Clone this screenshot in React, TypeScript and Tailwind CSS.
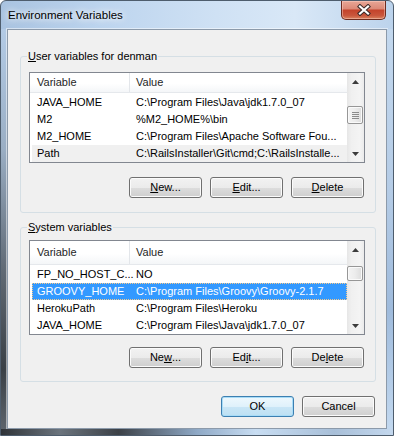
import type { ReactNode } from "react";

type Row = { name: string; value: string; state?: "selected" | "inactive" };

const userVars: Row[] = [
  { name: "JAVA_HOME", value: "C:\\Program Files\\Java\\jdk1.7.0_07" },
  { name: "M2", value: "%M2_HOME%\\bin" },
  { name: "M2_HOME", value: "C:\\Program Files\\Apache Software Fou..." },
  { name: "Path", value: "C:\\RailsInstaller\\Git\\cmd;C:\\RailsInstalle...", state: "inactive" },
];

const systemVars: Row[] = [
  { name: "FP_NO_HOST_C...", value: "NO" },
  { name: "GROOVY_HOME", value: "C:\\Program Files\\Groovy\\Groovy-2.1.7", state: "selected" },
  { name: "HerokuPath", value: "C:\\Program Files\\Heroku" },
  { name: "JAVA_HOME", value: "C:\\Program Files\\Java\\jdk1.7.0_07" },
];

// label with one underlined access key
function Hot({ text, at }: { text: string; at: number }) {
  return (
    <>
      {text.slice(0, at)}
      <u className="underline-offset-[1px]">{text[at]}</u>
      {text.slice(at + 1)}
    </>
  );
}

function Btn({ children, primary }: { children: ReactNode; primary?: boolean }) {
  return (
    <button
      className={
        primary
          ? "flex h-[21px] w-[73px] items-center justify-center rounded-[3px] border border-[#3c7fb1] bg-[linear-gradient(180deg,#eef8fd_0%,#dff1fb_50%,#c9e6f6_50%,#bde0f3_100%)] text-black shadow-[inset_0_0_0_1px_#a8dcf7]"
          : "flex h-[21px] w-[73px] items-center justify-center rounded-[3px] border border-[#707070] bg-[linear-gradient(180deg,#f2f2f2_0%,#ebebeb_50%,#dddddd_50%,#cfcfcf_100%)] text-black shadow-[inset_0_0_0_1px_#fbfbfb]"
      }
    >
      {children}
    </button>
  );
}

function Arrow({ up }: { up?: boolean }) {
  return (
    <div className="flex h-[17px] items-center justify-center">
      <svg width="7" height="4" viewBox="0 0 7 4">
        <polygon points={up ? "0,4 3.5,0 7,4" : "0,0 3.5,4 7,0"} fill="#3c3c3c" />
      </svg>
    </div>
  );
}

function ScrollBar({ thumb, grip }: { thumb: string; grip?: boolean }) {
  return (
    <div className="flex w-[17px] flex-col bg-[linear-gradient(90deg,#e6e6e6_0%,#f0f0f0_25%,#f4f4f4_75%,#ebebeb_100%)]">
      <Arrow up />
      <div className="flex-1">
        <div
          className={`${thumb} flex w-[16px] flex-col items-center justify-center gap-[1px] rounded-[2px] border border-[#979797] bg-[linear-gradient(90deg,#f4f4f4_0%,#ececec_50%,#dcdcdc_100%)] shadow-[inset_0_0_0_1px_#fafafa]`}
        >
          {grip && (
            <>
              <div className="h-[1px] w-[7px] bg-[#8a8a8a]" />
              <div className="h-[1px] w-[7px] bg-[#8a8a8a]" />
              <div className="h-[1px] w-[7px] bg-[#8a8a8a]" />
              <div className="h-[1px] w-[7px] bg-[#8a8a8a]" />
            </>
          )}
        </div>
      </div>
      <Arrow />
    </div>
  );
}

function VarList({ rows, height, thumb, grip }: { rows: Row[]; height: string; thumb: string; grip?: boolean }) {
  return (
    <div className={`${height} ml-[8px] flex w-[336px] overflow-hidden border border-[#828790] bg-white`}>
      <div className="flex flex-1 flex-col">
        <div className="flex h-[24px] border-b border-[#e5e8ec] bg-[linear-gradient(180deg,#ffffff_0%,#ffffff_55%,#f4f6f8_100%)] text-[#1e1e1e]">
          <div className="flex w-[100px] items-center border-r border-[#e3e6ea] pl-[7px]">Variable</div>
          <div className="flex items-center pl-[6px]">Value</div>
        </div>
        <div className="pt-[1px]">
          {rows.map((r) => (
            <div
              key={r.name}
              className={
                r.state === "selected"
                  ? "ml-[2px] flex h-[17px] items-center bg-[#3399ff] text-white outline-1 -outline-offset-1 outline-dotted outline-[#f7c98a]"
                  : r.state === "inactive"
                    ? "ml-[2px] flex h-[17px] items-center bg-[#f0f0f0]"
                    : "ml-[2px] flex h-[17px] items-center"
              }
            >
              <div className="w-[98px] shrink-0 whitespace-nowrap pl-[5px]">{r.name}</div>
              <div className="truncate whitespace-nowrap pl-[6px]">{r.value}</div>
            </div>
          ))}
        </div>
      </div>
      <ScrollBar thumb={thumb} grip={grip} />
    </div>
  );
}

export default function App() {
  return (
    <div className="h-[436px] w-[394px] bg-white font-['Liberation_Sans',Arial,sans-serif] text-[11px] leading-[13px] text-black">
      <div className="flex h-[436px] w-[394px] flex-col overflow-hidden rounded-t-[6px] border border-[#4e5d6d] bg-[linear-gradient(90deg,#a9c3e0_0%,#bcd4ee_25%,#cfe1f4_55%,#d9e8f7_75%,#bcd3ec_100%)]">
        {/* title bar */}
        <div className="flex h-[28px] items-start">
          <div className="pl-[7px] pt-[8px] text-[11.5px] [text-shadow:0_0_6px_#ffffff,0_0_10px_#ffffff]">
            Environment Variables
          </div>
          <div className="ml-auto mr-[7px] flex h-[19px] w-[45px] items-center justify-center rounded-b-[5px] border border-t-0 border-[#6d2b1f] bg-[linear-gradient(180deg,#e8a696_0%,#dc8a78_42%,#c4442c_52%,#c9563c_80%,#d9825f_100%)] shadow-[inset_0_0_0_1px_rgba(255,215,205,0.45)]">
            <svg width="16" height="12" viewBox="0 0 16 12">
              <path d="M4 2.5 L12 9.5 M12 2.5 L4 9.5" stroke="#3b2a28" strokeWidth="4.2" strokeLinecap="square" />
              <path d="M4 2.5 L12 9.5 M12 2.5 L4 9.5" stroke="#ffffff" strokeWidth="2.2" strokeLinecap="square" />
            </svg>
          </div>
        </div>

        <div className="flex h-[400px]">
          <div className="w-[6px] bg-[linear-gradient(180deg,#b3cbe6_0%,#9aaec4_30%,#616b76_60%,#3a4046_85%,#5c636b_100%)]" />

          {/* client area */}
          <div className="flex h-[400px] w-[380px] flex-col border border-[#8c9aaa] bg-[#f0f0f0] shadow-[0_0_0_1px_rgba(255,255,255,0.5)]">
            <div className="ml-[12px] mt-[26px] w-[356px] rounded-[3px] border border-[#d5dfe5] pb-[14px]">
              <div className="-mt-[7px] ml-[6px] h-[13px] w-fit bg-[#f0f0f0] px-[1px]">
                <Hot text="User variables for denman" at={0} />
              </div>
              <div className="mt-[9px]">
                <VarList rows={userVars} height="h-[91px]" thumb="mt-[16px] h-[18px]" grip />
              </div>
              <div className="ml-[8px] mt-[14px] flex w-[335px] justify-end gap-[8px]">
                <Btn><Hot text="New..." at={0} /></Btn>
                <Btn><Hot text="Edit..." at={0} /></Btn>
                <Btn><Hot text="Delete" at={0} /></Btn>
              </div>
            </div>

            <div className="ml-[12px] mt-[14px] w-[356px] rounded-[3px] border border-[#d5dfe5] pb-[13px]">
              <div className="-mt-[7px] ml-[6px] h-[13px] w-fit bg-[#f0f0f0] px-[1px]">
                <Hot text="System variables" at={0} />
              </div>
              <div className="mt-[6px]">
                <VarList rows={systemVars} height="h-[95px]" thumb="mt-[8px] h-[15px]" />
              </div>
              <div className="ml-[8px] mt-[12px] flex w-[335px] justify-end gap-[8px]">
                <Btn><Hot text="New..." at={2} /></Btn>
                <Btn><Hot text="Edit..." at={2} /></Btn>
                <Btn><Hot text="Delete" at={2} /></Btn>
              </div>
            </div>

            <div className="ml-[12px] mt-[14px] flex w-[355px] justify-end gap-[8px]">
              <Btn primary>OK</Btn>
              <Btn>Cancel</Btn>
            </div>
          </div>

          <div className="w-[6px] bg-[linear-gradient(180deg,#c3d8ee_0%,#b5cce6_40%,#9fbbdc_70%,#c2d8ef_100%)]" />
        </div>

        <div className="h-[6px] bg-[linear-gradient(90deg,#2f3338_0%,#6b747d_15%,#3c4147_30%,#8fa9c6_50%,#c8ddf2_65%,#a8bfd8_85%,#c4d8ee_100%)]" />
      </div>
    </div>
  );
}
